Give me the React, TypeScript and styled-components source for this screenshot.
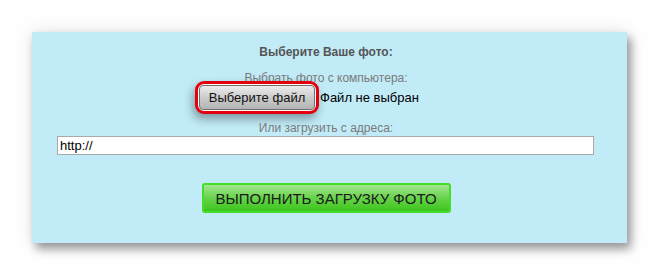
import React from "react";
import styled, { createGlobalStyle } from "styled-components";

const GlobalStyle = createGlobalStyle`
  html, body {
    margin: 0;
    padding: 0;
    background: #fefefe;
    font-family: "Liberation Sans", Arial, sans-serif;
  }
`;

const Page = styled.div`
  width: 659px;
  height: 276px;
  padding: 32px 32px 0 32px;
  box-sizing: border-box;
`;

const Panel = styled.form`
  width: 595px;
  box-sizing: border-box;
  padding: 12px 31px 30px 24px;
  background: #c1ebf7;
  box-shadow: 4px 6px 9px rgba(0, 0, 0, 0.38), 0 0 16px rgba(0, 0, 0, 0.1);
  display: flex;
  flex-direction: column;
  align-items: center;
`;

const Title = styled.div`
  font-size: 12px;
  line-height: 16px;
  font-weight: bold;
  color: #555;
`;

const Label = styled.div<{ $top: number }>`
  margin-top: ${(p) => p.$top}px;
  font-size: 12px;
  line-height: 16px;
  color: #7a7a7a;
`;

const FileRow = styled.div`
  width: 254px;
  margin-top: -5px;
  display: flex;
  align-items: center;
  gap: 1px;
`;

const Ring = styled.div`
  padding: 1px;
  margin-left: -4px;
  border: 3px solid #e3000f;
  border-radius: 9px;
  background: #fff;
  box-shadow: -2px 5px 10px rgba(0, 0, 0, 0.35);
  display: flex;
`;

const FileButton = styled.button`
  height: 25px;
  width: 116px;
  padding: 0;
  border: 1px solid #6f6f6f;
  border-radius: 4px;
  background: linear-gradient(to bottom, #ececec, #c9c9c9 55%, #b4b4b4);
  font-family: inherit;
  font-size: 13px;
  color: #111;
`;

const FileName = styled.span`
  font-size: 13px;
  color: #000;
`;

const UrlInput = styled.input`
  align-self: flex-start;
  margin-left: 1px;
  width: 537px;
  height: 19px;
  box-sizing: border-box;
  padding: 0 2px;
  border: 1px solid #a9a9a9;
  background: #fff;
  font-family: inherit;
  font-size: 13px;
  color: #000;
  outline: none;
`;

const SubmitButton = styled.button`
  margin-top: 28px;
  width: 249px;
  height: 30px;
  border: 2px solid #44dd2a;
  border-radius: 3px;
  background: linear-gradient(to bottom, #a4e690, #67d24a 50%, #3dc61d);
  font-family: inherit;
  font-size: 15px;
  color: #1a1a1a;
  padding: 0;
`;

const App = () => {
  return (
    <>
      <GlobalStyle />
      <Page>
        <Panel onSubmit={(e) => e.preventDefault()}>
          <Title>Выберите Ваше фото:</Title>
          <Label $top={10}>Выбрать фото с компьютера:</Label>
          <FileRow>
            <Ring>
              <FileButton type='button'>Выберите файл</FileButton>
            </Ring>
            <FileName>Файл не выбран</FileName>
          </FileRow>
          <Label $top={6}>Или загрузить с адреса:</Label>
          <UrlInput defaultValue='http://' />
          <SubmitButton type='submit'>ВЫПОЛНИТЬ ЗАГРУЗКУ ФОТО</SubmitButton>
        </Panel>
      </Page>
    </>
  );
};

export default App;
